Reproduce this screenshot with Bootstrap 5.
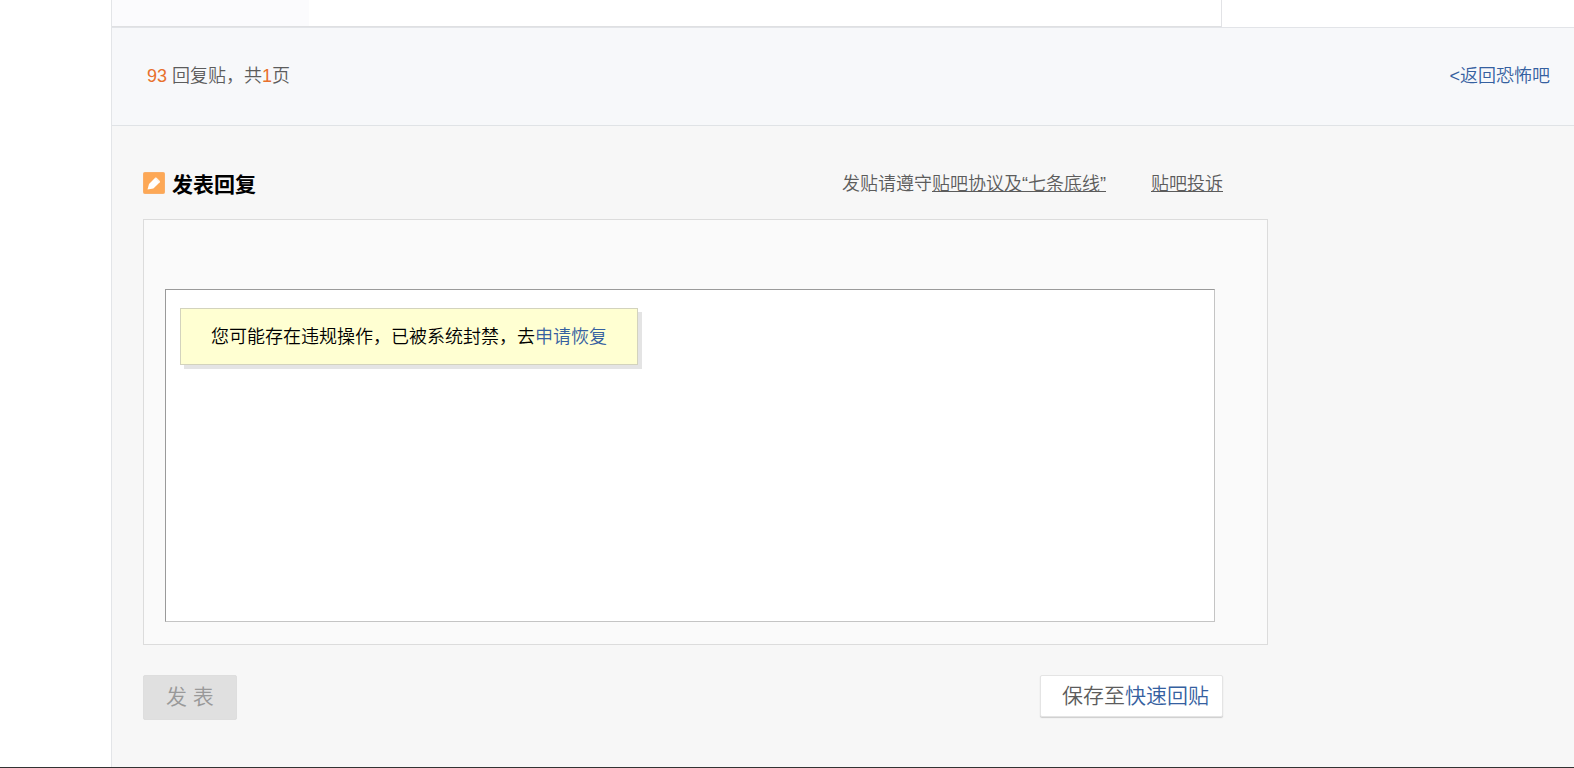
<!DOCTYPE html>
<html lang="zh-CN">
<head>
<meta charset="utf-8">
<meta name="viewport" content="width=device-width, initial-scale=1">
<title>发表回复 - 恐怖吧</title>
<link href="https://cdn.jsdelivr.net/npm/bootstrap@5.3.0/dist/css/bootstrap.min.css" rel="stylesheet">
<style>
body { font-family: "Liberation Sans", "Noto Sans CJK SC", sans-serif; font-size: 18px; font-weight: 350; line-height: 24px; color: #5c5c5c; background: #fff; }
a { color: #3560a0; text-decoration: none; }
.page-wrap { min-height: 100vh; padding-left: 111px; border-bottom: 1px solid #333; }
.thread-pane { border-left: 1px solid #e3e5e8; background: #f7f7f7; }
.post-strip { background: #fff; border-bottom: 1px solid #e2e4e8; }
.post-end { max-width: 1110px; height: 27px; border-right: 1px solid #e2e3e6; border-bottom: 1px solid #dfe0e2; }
.post-author { width: 197px; background: #fbfbfd; }
.pager-bar { padding: 36px 24px 37px 35px; background: #f7f8fa; border-bottom: 1px solid #e0e3e6; }
.num { color: #e8702c; }
.reply-area { max-width: 1186px; padding: 42px 30px 47px 31px; }
.inner-row { padding-right: 45px; }
.reply-title { font-size: 21px; line-height: 34px; font-weight: 700; color: #000; gap: 7px; }
.rules a { color: #5c5c5c; text-decoration: underline; }
.rules { gap: 45px; }
.editor-box { margin-top: 17px; padding: 69px 52px 22px 21px; background: #fafafa; border: 1px solid #dcdcdc; }
.editor-text { height: 333px; resize: none; background: #fff; border: 1px solid; border-color: #9a9a9a #c4c4c4 #c4c4c4 #9a9a9a; }
.ban-tip { left: 15px; top: 19px; padding: 16px 30px 15px; background: #ffffd2; border: 1px solid #d3d3bd; box-shadow: 4px 4px 0 #e4e4e4; color: #000; }
.action-row { margin-top: 30px; }
.act { font-size: 21px; line-height: 28px; font-weight: 350; border-radius: 2px; }
.act-send, .act-send:disabled { padding: 7px 22px 8px; background: #e0e0e0; border: 1px solid #dedede; color: #999; opacity: 1; }
.act-save { padding: 6px 13px 6px 21px; background: #fff; border: 1px solid #e4e4e4; box-shadow: 0 1px 1px #ccc; color: #5c5c5c; }
.act-save:hover { background: #fff; border-color: #ccc; }
.act-save span { color: #3560a0; }
</style>
</head>
<body>
<div class="page-wrap d-flex">
  <main class="thread-pane flex-grow-1">
    <div class="post-strip">
      <div class="post-end d-flex"><div class="post-author"></div></div>
    </div>
    <nav class="pager-bar d-flex justify-content-between" aria-label="分页">
      <div><span class="num">93</span> 回复贴，共<span class="num">1</span>页</div>
      <a href="#">&lt;返回恐怖吧</a>
    </nav>
    <form class="reply-area">
      <div class="inner-row d-flex justify-content-between">
        <label for="reply" class="reply-title d-flex">
          <svg width="22" height="22" viewBox="0 0 22 22" aria-hidden="true" class="mt-1 flex-shrink-0">
            <rect x=".5" y=".5" width="21" height="21" rx="1" fill="#fda856" stroke="#f9ae68"/>
            <path d="M4.500 17.500l1.500-5.600 6.200-6.100q.700-.600 1.400 0l3.200 3.100q.600.700 0 1.300l-6.400 6.200z" fill="#fff"/>
            <path d="M12.200 5.800l4.600 4.400" stroke="#ffe3c6" stroke-width=".7"/>
          </svg>
          <span>发表回复</span>
        </label>
        <div class="rules d-flex pt-1">
          <span>发贴请遵守<a href="#">贴吧协议及“七条底线”</a></span>
          <a href="#">贴吧投诉</a>
        </div>
      </div>
      <div class="editor-box">
        <div class="position-relative">
          <textarea id="reply" class="editor-text d-block w-100" disabled></textarea>
          <div class="ban-tip position-absolute">您可能存在违规操作，已被系统封禁，去<a href="#">申请恢复</a></div>
        </div>
      </div>
      <div class="action-row inner-row d-flex justify-content-between align-items-start">
        <button type="submit" class="act act-send btn" disabled>发 表</button>
        <button type="button" class="act act-save btn">保存至<span>快速回贴</span></button>
      </div>
    </form>
  </main>
</div>
<script src="https://cdn.jsdelivr.net/npm/bootstrap@5.3.0/dist/js/bootstrap.bundle.min.js"></script>
</body>
</html>
